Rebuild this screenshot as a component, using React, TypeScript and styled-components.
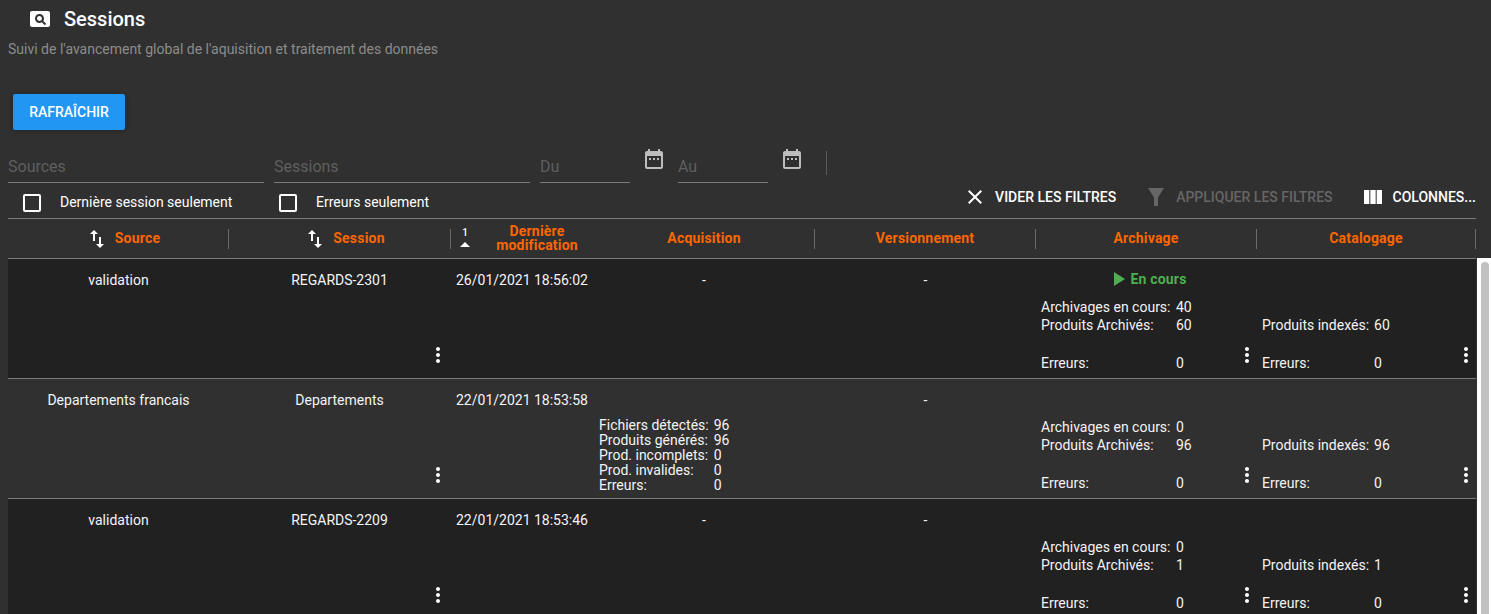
import React from 'react';
import styled, { createGlobalStyle } from 'styled-components';
import {
  MdClose,
  MdDateRange,
  MdImportExport,
  MdMoreVert,
  MdPageview,
  MdPlayArrow,
  MdViewColumn,
  MdArrowDropUp,
} from 'react-icons/md';

const GlobalStyle = createGlobalStyle`
  html, body {
    margin: 0;
    height: 100%;
    overflow: hidden;
    background: #303030;
    font-family: Roboto, "Liberation Sans", sans-serif;
    color: #fff;
  }
`;

const Page = styled.div`
  position: relative;
  width: 1491px;
  height: 614px;
  overflow: hidden;
  background: #303030;
`;

const TitleBar = styled.div`
  display: flex;
  align-items: center;
  height: 24px;
  padding: 7px 0 0 28px;
  gap: 12px;
`;

const Title = styled.h1`
  margin: 0;
  font-size: 20px;
  font-weight: 500;
  line-height: 24px;
`;

const Subtitle = styled.div`
  margin: 10px 0 0 8px;
  font-size: 14px;
  line-height: 16px;
  color: #8c8c8c;
`;

const RefreshButton = styled.button`
  display: block;
  margin: 37px 0 0 13px;
  width: 112px;
  height: 36px;
  padding: 0;
  border: none;
  border-radius: 2px;
  background: #2196f3;
  color: #fff;
  font: 500 14px Roboto, sans-serif;
  box-shadow: 0 1px 6px rgba(0, 0, 0, 0.12), 0 1px 4px rgba(0, 0, 0, 0.12);
`;

const FilterRow = styled.div`
  display: flex;
  align-items: flex-start;
  margin: 17px 0 0 8px;
  height: 37px;
`;

const FilterField = styled.div<{ $w: number }>`
  width: ${(p) => p.$w}px;
  height: 36px;
  box-sizing: border-box;
  border-bottom: 1px solid #7a7a7a;
  margin-right: 10px;
  padding-top: 10px;
  font-size: 16px;
  line-height: 20px;
  color: #5f5f5f;
`;

const CalendarButton = styled.div`
  box-sizing: border-box;
  width: 38px;
  padding-left: 2px;
  color: #bdbdbd;
  display: flex;
`;

const VerticalRule = styled.div`
  width: 1px;
  height: 24px;
  margin: 4px 0 0 10px;
  background: #5a5a5a;
`;

const ToolRow = styled.div`
  display: flex;
  align-items: center;
  margin-left: 8px;
  width: 1468px;
  height: 34px;
`;

const CheckItem = styled.label<{ $w: number }>`
  display: flex;
  align-items: center;
  width: ${(p) => p.$w}px;
  margin-top: 2px;
  padding-left: 15px;
  box-sizing: border-box;
  font-size: 14px;
`;

const CheckBox = styled.span`
  display: block;
  width: 14px;
  height: 14px;
  border: 2px solid #fff;
  border-radius: 2px;
  margin: 2px 19px 0 0;
`;

const ToolActions = styled.div`
  display: flex;
  align-items: center;
  margin-left: auto;
  margin-top: -8px;
`;

const ToolButton = styled.div<{ $disabled?: boolean; $ml: number }>`
  display: flex;
  align-items: center;
  gap: 8px;
  margin-left: ${(p) => p.$ml}px;
  font-size: 14px;
  font-weight: 500;
  color: ${(p) => (p.$disabled ? '#666' : '#fff')};
`;

const Table = styled.div`
  margin-left: 8px;
  width: 1468px;
  border-top: 1px solid #7a7a7a;
`;

const COLUMNS = '221px 222px 143px 221px 221px 221px 219px';

const HeadRow = styled.div`
  display: grid;
  grid-template-columns: ${COLUMNS};
  height: 39px;
  align-items: center;
  border-bottom: 1px solid #7a7a7a;
`;

const HeadCell = styled.div<{ $divider?: boolean; $sortable?: boolean }>`
  display: flex;
  align-items: center;
  justify-content: center;
  box-sizing: border-box;
  height: 20px;
  gap: 6px;
  padding-left: ${(p) => (p.$sortable ? 9 : 0)}px;
  color: #ff6600;
  font-size: 14px;
  font-weight: 700;
  letter-spacing: 0.2px;
  text-align: center;
  line-height: 14px;
  border-right: ${(p) => (p.$divider ? '1px solid #6a6a6a' : '1px solid transparent')};
`;

const HeadText = styled.span`
  margin-top: -2px;
`;

const SortIcon = styled.span`
  display: flex;
  color: #fff;
`;

const SortOrder = styled.div`
  display: flex;
  flex-direction: column;
  align-items: center;
  width: 16px;
  margin-left: 6px;
  color: #fff;
  font-size: 10px;
  font-weight: 500;
  line-height: 11px;
  letter-spacing: 0;
  flex: none;
  transform: translateY(-1px);
`;

const TriangleWrap = styled.span`
  display: flex;
  height: 8px;
  margin-top: 2px;
  align-items: center;
  justify-content: center;
  transform: translateY(1px);
`;

const HeadLabel = styled(HeadText)`
  flex: 1;
  padding-left: 8px;
`;

const DateHead = styled(HeadCell)`
  justify-content: flex-start;
  gap: 0;
`;

const Row = styled.div<{ $odd: boolean }>`
  display: grid;
  grid-template-columns: ${COLUMNS};
  height: 119px;
  border-bottom: 1px solid #7a7a7a;
  background: ${(p) => (p.$odd ? '#212121' : '#303030')};
`;

const Cell = styled.div`
  position: relative;
  font-size: 14px;
  line-height: 16px;
  padding-top: 13px;
  text-align: center;
  color: #f4f4f4;
`;

const SessionCell = styled(Cell)`
  padding-right: 1px;
`;

const DateCell = styled(Cell)`
  text-align: left;
  padding-left: 5px;
`;

const AcqCell = styled(Cell)`
  padding-left: 5px;
  text-align: left;
`;

const Dash = styled.div`
  text-align: center;
  padding-right: 6px;
`;

const Status = styled.div`
  display: flex;
  align-items: center;
  justify-content: center;
  height: 14px;
  font-weight: 700;
  letter-spacing: 0.2px;
  color: #4caf50;
`;

const AcqStats = styled.div`
  margin-top: 26px;
  display: grid;
  grid-template-columns: max-content 1fr;
  column-gap: 5px;
  line-height: 15px;
`;

const WorkStats = styled.div<{ $withStatus: boolean }>`
  display: grid;
  grid-template-columns: 135px 1fr;
  text-align: left;
  padding-left: 5px;
  line-height: 18px;
  margin-top: ${(p) => (p.$withStatus ? 12 : 26)}px;
`;

const ErrorLine = styled.div`
  grid-column: 1 / 3;
  display: grid;
  grid-template-columns: 135px 1fr;
  margin-top: 20px;
`;

const IndexStats = styled(WorkStats)`
  grid-template-columns: max-content 1fr;
  column-gap: 5px;
  margin-top: 44px;
`;

const IndexErrors = styled(ErrorLine)`
  grid-template-columns: 112px 1fr;
`;

const KebabButton = styled.div<{ $right: number }>`
  position: absolute;
  right: ${(p) => p.$right}px;
  bottom: 11px;
  display: flex;
  color: #fff;
`;

const Scrollbar = styled.div`
  position: absolute;
  left: 1477px;
  top: 258px;
  width: 14px;
  height: 356px;
  background: #fff;
`;

const ScrollThumb = styled.div`
  margin: 4px 0 0 4px;
  width: 8px;
  height: 352px;
  border-radius: 4px 4px 0 0;
  background: #c1c1c1;
`;

const FunnelIcon = () => (
  <svg width="24" height="24" viewBox="0 0 24 24" fill="#666">
    <path d="M4 3h16l-6 9.5V21h-4v-8.5z" />
  </svg>
);

type RowData = {
  source: string;
  session: string;
  date: string;
  running?: boolean;
  acquisition?: [string, number][];
  enCours: number;
  archived: number;
  indexed: number;
};

const rows: RowData[] = [
  { source: 'validation', session: 'REGARDS-2301', date: '26/01/2021 18:56:02', running: true, enCours: 40, archived: 60, indexed: 60 },
  {
    source: 'Departements francais',
    session: 'Departements',
    date: '22/01/2021 18:53:58',
    acquisition: [
      ['Fichiers détectés:', 96],
      ['Produits générés:', 96],
      ['Prod. incomplets:', 0],
      ['Prod. invalides:', 0],
      ['Erreurs:', 0],
    ],
    enCours: 0,
    archived: 96,
    indexed: 96,
  },
  { source: 'validation', session: 'REGARDS-2209', date: '22/01/2021 18:53:46', enCours: 0, archived: 1, indexed: 1 },
];

const Kebab = ({ right }: { right: number }) => (
  <KebabButton $right={right}>
    <MdMoreVert size={24} />
  </KebabButton>
);

const App: React.FC = () => (
  <Page>
    <GlobalStyle />
    <TitleBar>
      <MdPageview size={24} />
      <Title>Sessions</Title>
    </TitleBar>
    <Subtitle>Suivi de l'avancement global de l'aquisition et traitement des données</Subtitle>
    <RefreshButton>RAFRAÎCHIR</RefreshButton>

    <FilterRow>
      <FilterField $w={256}>Sources</FilterField>
      <FilterField $w={256}>Sessions</FilterField>
      <FilterField $w={90}>Du</FilterField>
      <CalendarButton>
        <MdDateRange size={24} />
      </CalendarButton>
      <FilterField $w={90}>Au</FilterField>
      <CalendarButton>
        <MdDateRange size={24} />
      </CalendarButton>
      <VerticalRule />
    </FilterRow>

    <ToolRow>
      <CheckItem $w={256}>
        <CheckBox />
        Dernière session seulement
      </CheckItem>
      <CheckItem $w={256}>
        <CheckBox />
        Erreurs seulement
      </CheckItem>
      <ToolActions>
        <ToolButton $ml={0}>
          <MdClose size={24} />
          VIDER LES FILTRES
        </ToolButton>
        <ToolButton $disabled $ml={28}>
          <FunnelIcon />
          APPLIQUER LES FILTRES
        </ToolButton>
        <ToolButton $ml={28}>
          <MdViewColumn size={24} />
          COLONNES...
        </ToolButton>
      </ToolActions>
    </ToolRow>

    <Table>
      <HeadRow>
        <HeadCell $divider $sortable>
          <SortIcon>
            <MdImportExport size={24} />
          </SortIcon>
          <HeadText>Source</HeadText>
        </HeadCell>
        <HeadCell $divider $sortable>
          <SortIcon>
            <MdImportExport size={24} />
          </SortIcon>
          <HeadText>Session</HeadText>
        </HeadCell>
        <DateHead>
          <SortOrder>
            1
            <TriangleWrap>
              <MdArrowDropUp size={24} />
            </TriangleWrap>
          </SortOrder>
          <HeadLabel>
            Dernière
            <br />
            modification
          </HeadLabel>
        </DateHead>
        <HeadCell $divider>
          <HeadText>Acquisition</HeadText>
        </HeadCell>
        <HeadCell $divider>
          <HeadText>Versionnement</HeadText>
        </HeadCell>
        <HeadCell $divider>
          <HeadText>Archivage</HeadText>
        </HeadCell>
        <HeadCell $divider>
          <HeadText>Catalogage</HeadText>
        </HeadCell>
      </HeadRow>

      {rows.map((row, i) => (
        <Row key={row.date} $odd={i % 2 === 0}>
          <Cell>{row.source}</Cell>
          <SessionCell>
            {row.session}
            <Kebab right={1} />
          </SessionCell>
          <DateCell>{row.date}</DateCell>
          <AcqCell>
            {row.acquisition ? (
              <AcqStats>
                {row.acquisition.map(([label, value]) => (
                  <React.Fragment key={label}>
                    <span>{label}</span>
                    <span>{value}</span>
                  </React.Fragment>
                ))}
              </AcqStats>
            ) : (
              <Dash>-</Dash>
            )}
          </AcqCell>
          <Cell>-</Cell>
          <Cell>
            {row.running && (
              <Status>
                <MdPlayArrow size={24} />
                En cours
              </Status>
            )}
            <WorkStats $withStatus={!!row.running}>
              <span>Archivages en cours:</span>
              <span>{row.enCours}</span>
              <span>Produits Archivés:</span>
              <span>{row.archived}</span>
              <ErrorLine>
                <span>Erreurs:</span>
                <span>0</span>
              </ErrorLine>
            </WorkStats>
            <Kebab right={-2} />
          </Cell>
          <Cell>
            <IndexStats $withStatus={false}>
              <span>Produits indexés:</span>
              <span>{row.indexed}</span>
              <IndexErrors>
                <span>Erreurs:</span>
                <span>0</span>
              </IndexErrors>
            </IndexStats>
            <Kebab right={-2} />
          </Cell>
        </Row>
      ))}
    </Table>
    <Scrollbar>
      <ScrollThumb />
    </Scrollbar>
  </Page>
);

export default App;
